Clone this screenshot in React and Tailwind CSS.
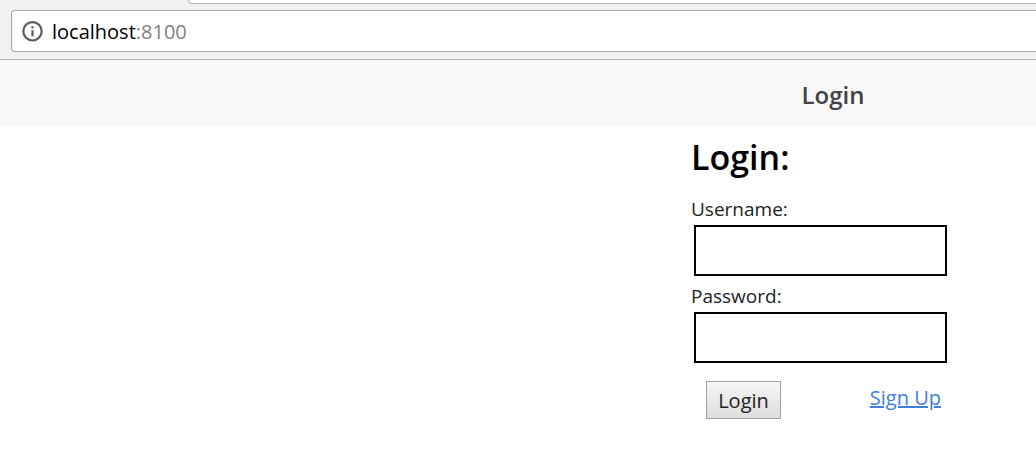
function InfoIcon() {
  return (
    <svg viewBox="0 0 22 22" className="h-[22px] w-[22px] shrink-0" fill="none" aria-hidden="true">
      <circle cx="10.5" cy="11.3" r="9.2" stroke="#5a5a5a" strokeWidth="2.2" />
      <path d="M9.4 10.2h2.2v6H9.4zM9.4 6.2h2.2v2.2H9.4z" fill="#5a5a5a" />
    </svg>
  );
}

function BrowserBar() {
  return (
    <div className="overflow-hidden border-b border-[#b4b4b4] bg-[#f1f1f1] pb-[7px]">
      <div className="ml-[188px] h-1 rounded-bl border-b border-l border-[#b4b4b4] bg-white" />
      <div className="mt-[6px] ml-[11px] flex h-[42px] items-center gap-2 rounded-l border border-r-0 border-[#a6a6a6] bg-white pl-[10px] text-xl">
        <InfoIcon />
        <span className="pt-px text-black">
          localhost<span className="text-[#808080]">:8100</span>
        </span>
      </div>
    </div>
  );
}

function Field({ id, label, type }) {
  return (
    <div className="flex flex-col">
      <label htmlFor={id} className="text-[19px] leading-8 text-[#222222]">
        {label}
      </label>
      <input
        id={id}
        type={type}
        className="mx-[3px] mb-1 h-[51px] w-[253px] border-2 border-black bg-white px-2 text-xl outline-none"
      />
    </div>
  );
}

export default function App() {
  return (
    <div className="min-h-screen bg-white font-['Open_Sans','Noto_Sans',sans-serif]">
      <BrowserBar />
      <header className="flex h-[66px] items-center bg-[#f8f8f8] pl-[66.7%]">
        <div className="w-[284px] pt-1 text-center text-2xl font-semibold text-[#424242]">Login</div>
      </header>
      <main className="pl-[66.7%]">
        <form className="w-[284px]" onSubmit={(event) => event.preventDefault()}>
          <h1 className="pt-[6px] pb-[10px] text-[34px] leading-[51px] font-semibold text-black">Login:</h1>
          <Field id="username" label="Username:" type="text" />
          <Field id="password" label="Password:" type="password" />
          <div className="mt-[14px] flex items-start justify-between pr-[34px] pl-[15px]">
            <button
              type="submit"
              className="h-[38px] w-[75px] border border-[#a0a0a0] bg-linear-to-b from-[#f6f6f6] to-[#dddddd] pt-px text-xl text-[#222222]"
            >
              Login
            </button>
            <a href="#signup" className="text-xl leading-[34px] text-[#4080dc] underline">
              Sign Up
            </a>
          </div>
        </form>
      </main>
    </div>
  );
}
